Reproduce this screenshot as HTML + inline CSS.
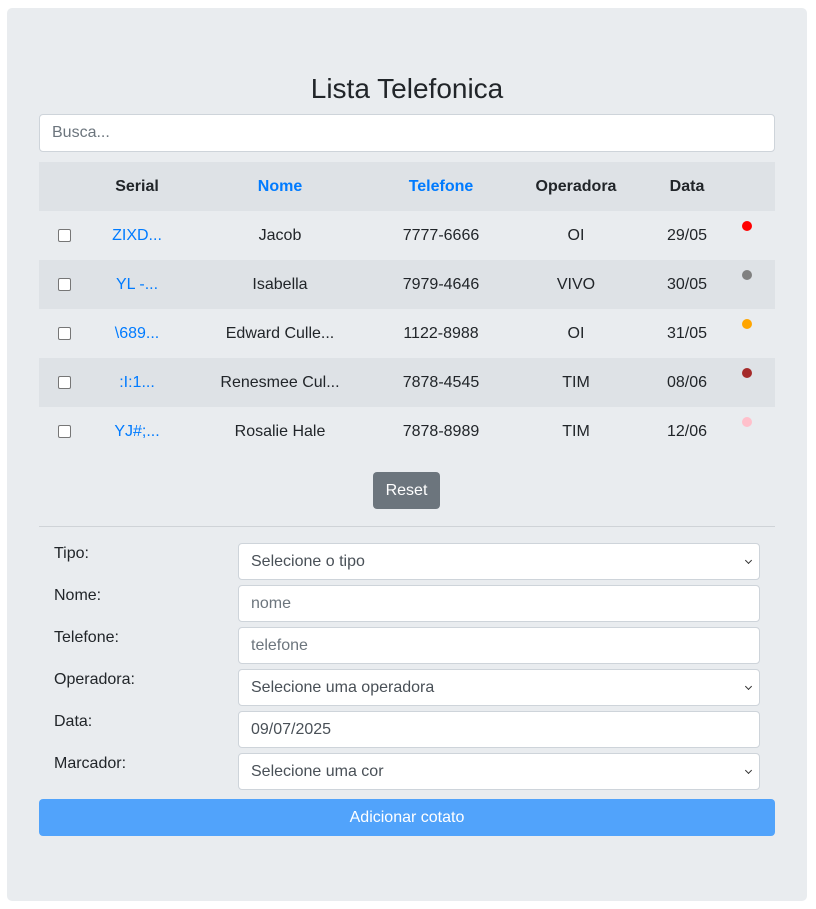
<!DOCTYPE html>
<html><head><meta charset="utf-8"><style>
*{box-sizing:border-box}
body{margin:0;background:#fff;font-family:"Liberation Sans",Arial,sans-serif;font-size:16px;color:#212529}
.card{position:absolute;left:7px;top:8px;width:800px;height:893px;background:#e9ecef;border-radius:5px}
h1{position:absolute;left:0;width:800px;top:63px;margin:0;text-align:center;font-weight:400;font-size:28px;line-height:36px}
.search{position:absolute;left:32px;top:106px;width:736px;height:38px;background:#fff;border:1px solid #ced4da;border-radius:4px;padding:0 12px;line-height:36px;color:#6c757d}
table{position:absolute;left:32px;top:154px;width:736px;border-collapse:collapse}
td,th{height:49px;text-align:center;padding:1px 0 0}
th{font-weight:700}
tr.s{background:#dee2e6}
.b{color:#007bff}
.cb{display:inline-block;width:13px;height:13px;border:1px solid #767676;border-radius:2px;background:#fff;vertical-align:middle}
.dot{display:block;width:10px;height:10px;border-radius:50%;margin:-15px 0 0 13px}
.reset{position:absolute;left:366px;top:464px;width:67px;height:37px;background:#6c757d;color:#fff;border-radius:4px;text-align:center;line-height:38px}
.hr{position:absolute;left:32px;top:518px;width:736px;border-top:1px solid #cfd3d7}
.lbl{position:absolute;left:47px}
.in{position:absolute;left:231px;width:522px;height:37px;background:#fff;border:1px solid #ced4da;border-radius:4px;padding:0 12px;line-height:36px;color:#495057}
.ph{color:#6c757d}
.ch{position:absolute;right:8px;top:14px;width:5px;height:5px;border-right:1px solid #333;border-bottom:1px solid #333;transform:rotate(45deg)}
.add{position:absolute;left:32px;top:791px;width:736px;height:37px;background:#51a3fb;color:#fff;border-radius:4px;text-align:center;line-height:38px}
</style></head><body>
<div class="card">
<h1>Lista Telefonica</h1>
<div class="search">Busca...</div>
<table>
<colgroup><col style="width:50px"><col style="width:96px"><col style="width:190px"><col style="width:132px"><col style="width:138px"><col style="width:84px"><col></colgroup>
<tr class="s"><th></th><th>Serial</th><th class="b">Nome</th><th class="b">Telefone</th><th>Operadora</th><th>Data</th><th></th></tr>
<tr><td><span class="cb"></span></td><td class="b">ZIXD...</td><td>Jacob</td><td>7777-6666</td><td>OI</td><td>29/05</td><td><span class="dot" style="background:#f00"></span></td></tr>
<tr class="s"><td><span class="cb"></span></td><td class="b">YL -...</td><td>Isabella</td><td>7979-4646</td><td>VIVO</td><td>30/05</td><td><span class="dot" style="background:#808080"></span></td></tr>
<tr><td><span class="cb"></span></td><td class="b">\689...</td><td>Edward Culle...</td><td>1122-8988</td><td>OI</td><td>31/05</td><td><span class="dot" style="background:#ffa500"></span></td></tr>
<tr class="s"><td><span class="cb"></span></td><td class="b">:I:1...</td><td>Renesmee Cul...</td><td>7878-4545</td><td>TIM</td><td>08/06</td><td><span class="dot" style="background:#a52a2a"></span></td></tr>
<tr><td><span class="cb"></span></td><td class="b">YJ#;...</td><td>Rosalie Hale</td><td>7878-8989</td><td>TIM</td><td>12/06</td><td><span class="dot" style="background:#ffc0cb"></span></td></tr>
</table>
<div class="reset">Reset</div>
<div class="hr"></div>
<div class="lbl" style="top:537px">Tipo:</div><div class="in" style="top:535px">Selecione o tipo<span class="ch"></span></div>
<div class="lbl" style="top:579px">Nome:</div><div class="in ph" style="top:577px">nome</div>
<div class="lbl" style="top:621px">Telefone:</div><div class="in ph" style="top:619px">telefone</div>
<div class="lbl" style="top:663px">Operadora:</div><div class="in" style="top:661px">Selecione uma operadora<span class="ch"></span></div>
<div class="lbl" style="top:705px">Data:</div><div class="in" style="top:703px">09/07/2025</div>
<div class="lbl" style="top:747px">Marcador:</div><div class="in" style="top:745px">Selecione uma cor<span class="ch"></span></div>
<div class="add">Adicionar cotato</div>
</div>
</body></html>
